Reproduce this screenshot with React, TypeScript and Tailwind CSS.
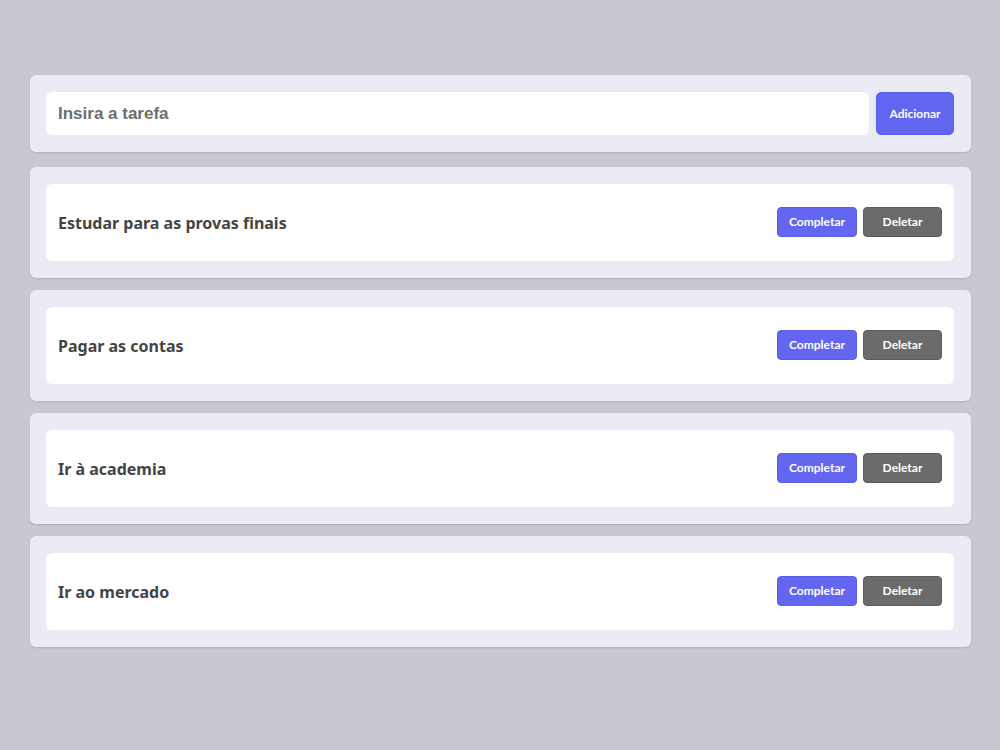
import React from "react";

const tasks = [
  "Estudar para as provas finais",
  "Pagar as contas",
  "Ir à academia",
  "Ir ao mercado",
];

export default function App() {
  return (
    <div className="min-h-[750px] w-full bg-[#c8c8d2] pt-[75px]" style={{ fontFamily: 'Lato, "Noto Sans", sans-serif' }}>
      <div className="ml-[30px] w-[941px] flex flex-col">
        <div className="flex gap-[7px] rounded-[6px] bg-[#ebebf5] p-[17px] pl-[16px] shadow-[0_1px_2px_rgba(0,0,0,0.12)]">
          <input
            placeholder="Insira a tarefa"
            className="h-[43px] flex-1 rounded-[6px] bg-white px-[12px] text-[17px] font-bold text-[#444] outline-none placeholder:text-[#6e6e6e]"
            style={{ fontFamily: '"Liberation Sans", Arial, sans-serif' }}
          />
          <button className="h-[43px] w-[78px] rounded-[5px] border border-[#5a5ee8] bg-[#6366f1] text-[12px] font-bold text-white">
            Adicionar
          </button>
        </div>
        <div className="mt-[15px] flex flex-col gap-[12px]">
          {tasks.map((t) => (
            <div key={t} className="rounded-[6px] bg-[#ebebf5] p-[17px] pl-[16px] shadow-[0_1px_2px_rgba(0,0,0,0.12)]">
              <div className="flex h-[77px] items-center justify-between rounded-[6px] bg-white px-[12px]">
                <span className="text-[16px] font-bold text-[#444]" style={{ fontFamily: '"Noto Sans", sans-serif' }}>{t}</span>
                <div className="flex gap-[6px] -mt-[1px]">
                  <button className="h-[30px] w-[80px] rounded-[4px] border border-[#5a5ee8] bg-[#6366f1] text-[12px] font-bold text-white">
                    Completar
                  </button>
                  <button className="h-[30px] w-[79px] rounded-[4px] border border-[#5c5c5c] bg-[#6b6b6b] text-[12px] font-bold text-white">
                    Deletar
                  </button>
                </div>
              </div>
            </div>
          ))}
        </div>
      </div>
    </div>
  );
}
